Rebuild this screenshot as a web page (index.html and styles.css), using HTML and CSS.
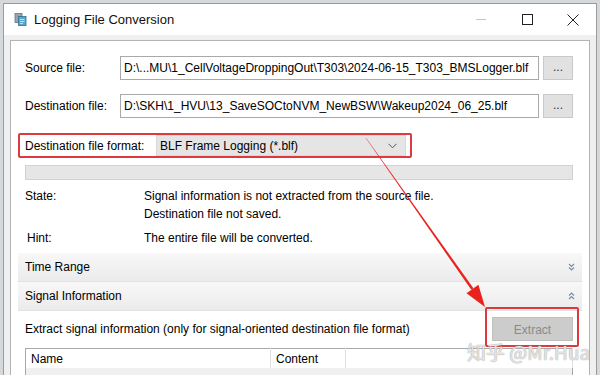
FILE: index.html
```html
<!DOCTYPE html>
<html lang="en">
<head>
  <meta charset="UTF-8" />
  <meta name="viewport" content="width=device-width, initial-scale=1.0" />
  <title>Logging File Conversion</title>
  <link rel="stylesheet" href="styles.css">
</head>
<body>

  <div class="window">
    <div class="titlebar">
      <svg class="app-icon" width="13" height="13" viewBox="0 0 13 13">
        <rect x="1" y="0.5" width="7" height="9" fill="#9aa4ad" stroke="#6d7780" stroke-width="0.8"/>
        <rect x="4.5" y="3.5" width="7.5" height="9" fill="#5aa7c9" stroke="#2f6f93" stroke-width="0.8"/>
        <path d="M6 6.5h4.5M6 8.5h4.5M6 10.5h3" stroke="#d8f0dc" stroke-width="0.8"/>
      </svg>
      <span class="title">Logging File Conversion</span>
      <div class="controls">
        <div class="ctl">
          <svg width="11" height="11" viewBox="0 0 11 11"><path d="M0 5.5h10" stroke="#c4c4c4" stroke-width="1"/></svg>
        </div>
        <div class="ctl">
          <svg width="11" height="11" viewBox="0 0 11 11"><rect x="0.5" y="0.5" width="10" height="10" fill="none" stroke="#222" stroke-width="1"/></svg>
        </div>
        <div class="ctl">
          <svg width="12" height="12" viewBox="0 0 12 12"><path d="M0.5 0.5l11 11M11.5 0.5l-11 11" stroke="#222" stroke-width="1"/></svg>
        </div>
      </div>
    </div>

    <div class="frame">
      <div class="panel">

        <div class="file-row">
          <span class="label">Source file:</span>
          <div class="input">D:\...MU\1_CellVoltageDroppingOut\T303\2024-06-15_T303_BMSLogger.blf</div>
          <div class="browse">...</div>
        </div>

        <div class="file-row">
          <span class="label">Destination file:</span>
          <div class="input">D:\SKH\1_HVU\13_SaveSOCtoNVM_NewBSW\Wakeup2024_06_25.blf</div>
          <div class="browse">...</div>
        </div>

        <div class="format-row">
          <span class="format-label">Destination file format:</span>
          <div class="select">
            <span>BLF Frame Logging (*.blf)</span>
            <svg width="9" height="6" viewBox="0 0 9 6"><path d="M0.5 0.8l4 4 4-4" fill="none" stroke="#555" stroke-width="1"/></svg>
          </div>
        </div>

        <div class="progress"></div>

        <div class="info">
          <span class="info-key">State:</span>
          <span>Signal information is not extracted from the source file.</span>
          <span></span>
          <span>Destination file not saved.</span>
          <span class="info-key hint">Hint:</span>
          <span class="hint-value">The entire file will be converted.</span>
        </div>

        <div class="section-header">
          <span>Time Range</span>
          <svg width="7" height="8" viewBox="0 0 7 8"><path d="M1 1l2.5 2.5L6 1M1 4.5l2.5 2.5L6 4.5" fill="none" stroke="#7a8ca0" stroke-width="1.1"/></svg>
        </div>

        <div class="section-header">
          <span>Signal Information</span>
          <svg width="7" height="8" viewBox="0 0 7 8"><path d="M1 3.5L3.5 1 6 3.5M1 7l2.5-2.5L6 7" fill="none" stroke="#7a8ca0" stroke-width="1.1"/></svg>
        </div>

        <div class="extract-row">
          <span>Extract signal information (only for signal-oriented destination file format)</span>
          <div class="extract-wrap">
            <div class="extract-btn">Extract</div>
          </div>
        </div>

        <table class="signals">
          <thead>
            <tr>
              <th class="col-name">Name</th>
              <th class="col-content">Content</th>
              <th></th>
            </tr>
          </thead>
          <tbody>
            <tr>
              <td></td>
              <td></td>
              <td></td>
            </tr>
          </tbody>
        </table>

      </div>
    </div>
  </div>

  <!-- annotation arrow from the format box to the Extract button -->
  <svg class="arrow" width="600" height="375" viewBox="0 0 600 375">
    <polygon points="365.8,138.1 366.2,137.9 473.4,288.2 471.3,289.8" fill="#e8231d"/>
    <polygon points="485,307 466.5,293.2 478.4,284.8" fill="#e8231d"/>
  </svg>

  <div class="watermark">知乎 @Mr.Hua</div>

</body>
</html>
```

FILE: styles.css
```css
body {
  margin: 0;
  width: 600px;
  height: 375px;
  overflow: hidden;
  background-color: #d6d9dc;
  font-family: "Liberation Sans", Arial, sans-serif;
  font-size: 12px;
  color: #000;
  position: relative;
}

.window {
  margin: 3px 0 0 3px;
  width: 592px;
  height: 371px;
  overflow: hidden;
  border: 1px solid #9a9a9a;
  border-bottom: none;
  background-color: #f0f0f0;
}

.titlebar {
  height: 31px;
  display: flex;
  align-items: center;
  background-color: #fff;
}

.app-icon {
  margin-left: 10px;
  margin-right: 7px;
}

.title {
  font-size: 13px;
  color: #111;
}

.controls {
  margin-left: auto;
  display: flex;
  height: 100%;
}

.ctl {
  width: 46px;
  display: flex;
  align-items: center;
  justify-content: center;
}

.frame {
  padding: 5px 6px 0 6px;
}

.panel {
  background-color: #fff;
  border: 1px solid #b4b4b4;
  border-bottom: none;
  height: 340px;
  padding: 14px 7px 0 7px;
}

.file-row {
  display: flex;
  align-items: center;
  height: 26px;
  padding: 0 9px 0 7px;
  margin-bottom: 12px;
}

.label {
  width: 95px;
  flex-shrink: 0;
}

.input {
  flex: 1;
  height: 22px;
  line-height: 22px;
  border: 1px solid #a9a9a9;
  padding-left: 3px;
  white-space: nowrap;
  overflow: hidden;
}

.browse {
  width: 30px;
  height: 24px;
  margin-left: 4px;
  background-color: #e1e1e1;
  border: 1px solid #c9c9c9;
  box-sizing: border-box;
  text-align: center;
  line-height: 20px;
  color: #333;
}

.format-row {
  display: flex;
  align-items: center;
  width: 381px;
  height: 21px;
  margin-top: 14px;
  padding: 0 4px 0 5px;
  border: 2px solid #dd3a3f;
  border-radius: 2px;
}

.format-label {
  width: 131px;
  flex-shrink: 0;
}

.select {
  flex: 1;
  height: 21px;
  background-color: #e5e5e5;
  border: 1px solid #d8d8d8;
  box-sizing: border-box;
  display: flex;
  align-items: center;
  justify-content: space-between;
  padding: 0 8px 0 3px;
}

.progress {
  height: 13px;
  margin: 7px 9px 0 7px;
  background-color: #e6e6e6;
  border: 1px solid #d2d2d2;
}

.info {
  display: grid;
  grid-template-columns: 119px 1fr;
  grid-auto-rows: 18px;
  align-items: center;
  margin-top: 7px;
  padding-left: 7px;
}

.hint {
  padding-left: 2px;
}

.hint, .hint-value {
  margin-top: 12px;
}

.section-header {
  height: 28px;
  display: flex;
  align-items: center;
  justify-content: space-between;
  padding: 0 7px;
  margin-top: 12px;
  background: linear-gradient(#f8f8f8, #ebebeb);
  border-bottom: 1px solid #e2e2e2;
}

.section-header + .section-header {
  margin-top: 0;
}

.extract-row {
  display: flex;
  align-items: center;
  justify-content: space-between;
  padding: 6px 9px 7px 7px;
}

.extract-wrap {
  position: relative;
}

.extract-wrap::after {
  content: "";
  position: absolute;
  left: -7px;
  right: -6px;
  top: -10px;
  bottom: -6px;
  border: 2px solid #dd3a3f;
  border-radius: 2px;
}

.extract-btn {
  width: 81px;
  height: 24px;
  line-height: 24px;
  text-align: center;
  background-color: #cccccc;
  border: 1px solid #bfbfbf;
  box-sizing: border-box;
  color: #8a8a8a;
}

.signals {
  width: 548px;
  margin-left: 7px;
  border-collapse: collapse;
  border: 1px solid #a8a8a8;
}

.signals th {
  height: 19px;
  font-weight: normal;
  text-align: left;
  padding: 0 0 0 5px;
  border-right: 1px solid #e0e0e0;
}

.col-name {
  width: 239px;
}

.col-content {
  width: 69px;
}

.signals td {
  height: 20px;
  background-color: #f0f0f0;
}

.arrow {
  position: absolute;
  left: 0;
  top: 0;
  pointer-events: none;
}

.watermark {
  position: absolute;
  left: 467px;
  top: 338px;
  font-family: "Noto Sans CJK SC", "Liberation Sans", sans-serif;
  font-size: 19px;
  color: rgba(255, 255, 255, 0.7);
  text-shadow: 0 0 1px #a8a8a8, 0 0 1px #a8a8a8;
  pointer-events: none;
}
```
